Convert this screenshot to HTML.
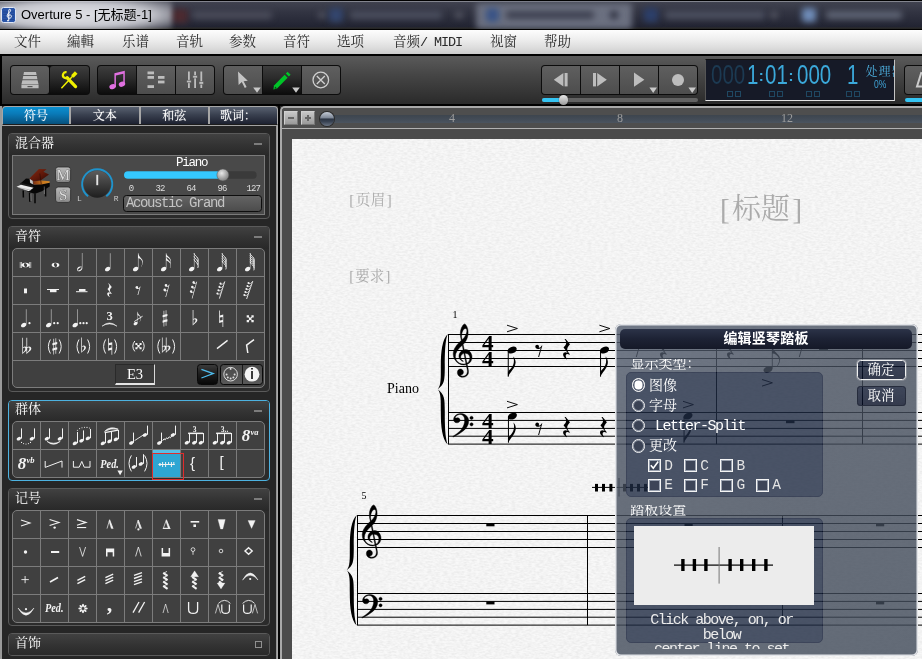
<!DOCTYPE html>
<html><head><meta charset="utf-8"><title>Overture 5</title>
<style>
*{box-sizing:border-box;margin:0;padding:0}
html,body{width:922px;height:659px;overflow:hidden;background:#2a2a2a}
body{font-family:"Liberation Sans","Noto Sans CJK SC",sans-serif;position:relative}
.abs,.abs *{position:absolute}
#app{will-change:transform;position:absolute;left:0;top:0;width:922px;height:659px;overflow:hidden;background:#292929}
.song{font-family:"Liberation Serif","Noto Serif CJK SC",serif}
/* title bar */
#title{left:0;top:0;width:922px;height:30px;background:#000;overflow:hidden}
#title .bar{left:0;top:1px;width:922px;height:28px;background:linear-gradient(180deg,#b8bac0 0,#40424f 4%,#323442 40%,#222432 92%,#2a2a2a 96%,#222 100%);overflow:hidden}
#title .glow{left:-20px;top:-2px;width:192px;height:32px;background:radial-gradient(ellipse at 50% 50%,rgba(235,236,240,.95) 0,rgba(225,226,232,.85) 55%,rgba(200,202,210,0) 100%);filter:blur(2.500px)}
#title .bl{filter:blur(3px);border-radius:3px}
#title .txt{left:21px;top:6.500px;font-size:13px;line-height:16px;color:#000;white-space:nowrap}
/* menu */
#menu{left:0;top:30px;width:922px;height:24px;background:linear-gradient(180deg,#fdfdfd 0,#f0f0f0 35%,#dcdcdc 75%,#cbcbcb 100%)}
#menu span{top:3.300px;font-size:13.500px;line-height:18px;color:#2a2a2a;white-space:nowrap}
/* toolbar */
#tb{left:0;top:54px;width:922px;height:52px;background:#000}
#tb .bg{left:2px;top:2px;width:920px;height:48px;background:linear-gradient(180deg,#5a5a5a 0,#454545 40%,#2a2a2a 100%)}
.btn{height:31px;top:11px;border:1px solid #1a1a1a;border-radius:4px;background:linear-gradient(180deg,#555 0,#3c3c3c 45%,#262626 55%,#1e1e1e 100%);box-shadow:inset 0 1px 0 rgba(255,255,255,.18)}

.grp{top:11px;height:30px;border-radius:4px;background:#0c0c0c;overflow:hidden;}
.b{top:1px;height:28px;}
.bl{background:linear-gradient(180deg,#5f5f5f 0,#4d4d4d 100%)}
.bd{background:linear-gradient(180deg,#3e3e3e 0,#2a2a2a 45%,#0c0c0c 100%)}
.grp svg{left:0;top:0}
#lcd{left:705px;top:5px;width:190px;height:42px;background:#161a27;border:1px solid #111;border-left-color:#555;border-right-color:#c4c4c4;border-bottom-color:#e4e4e4;overflow:hidden}
#lcd .d{top:2.800px;font-size:27.500px;line-height:24px;color:#3ba9da;transform-origin:0 0;transform:scaleX(.745);white-space:nowrap}
#lcd i{top:31.200px;width:6px;height:6px;border:1px solid #1f4862}

#left{left:0;top:106px;width:280px;height:553px;background:#262626}
#left .edge{left:0;top:0;width:2px;height:553px;background:#9a9a9a}
#tabs{left:2px;top:0;width:276px;height:19px;border:1px solid #a6a6a6;border-bottom-color:#1c1c1c;border-radius:4px 4px 0 0;overflow:hidden;background:#a6a6a6}
#tabs div{top:0;height:17px;background:linear-gradient(180deg,#596170 0,#3a4150 45%,#1d2130 100%);color:#fff;font-size:12px;line-height:18.500px;text-align:center;text-shadow:0 0 1px rgba(255,255,255,.6)}
#tabs div.on{background:linear-gradient(180deg,#0a8fd0 0,#0a7ab8 40%,#07507c 100%)}
#left .rb{left:276px;top:19px;width:2px;height:534px;background:linear-gradient(90deg,#8a8a8a,#b4b4b4)}
#left .tl{left:2px;top:19px;width:276px;height:1px;background:#a2a2a2}
#left .gap{left:278px;top:0;width:2px;height:553px;background:#050505}
.pnl{left:8px;width:262px;border:1px solid #5a5a5a;border-radius:4px;background:#2b2b2b;overflow:hidden}
.pnl .ph{left:0;top:0;width:262px;height:22px;background:linear-gradient(180deg,#414141 0,#333 50%,#282828 100%)}
.pnl .pt{left:6px;top:.8px;font-size:13px;line-height:16px;color:#fff;white-space:nowrap}
.grid{left:12px;width:253px;background:#404040;border:1px solid #7c7c7c;border-radius:5px;overflow:hidden}
.grid i{background:#7c7c7c}
.grid i.v{top:0;width:1px}
.grid i.h{left:0;width:253px;height:1px}
.ss{font-family:"Liberation Mono",monospace;letter-spacing:-.1em}

#score{left:280px;top:106px;width:642px;height:553px;background:#4b4b4b;border-left:2px solid #a9a9a9;border-top:2px solid #a9a9a9;border-radius:5px 0 0 0;overflow:hidden}
#ruler{left:0;top:0;width:640px;height:21px;background:#4e4e4e;border-bottom:1px solid #b2b2b2}
#ruler .trk{left:45px;top:7px;width:600px;height:8px;background:linear-gradient(180deg,#3d454e 0,#444d58 60%,#4b545f 100%)}
#ruler .zb{top:3px;width:14px;height:14px;background:linear-gradient(180deg,#c8c8c8 0,#9a9a9a 100%);border:1px solid #d0d0d0;border-right-color:#777;border-bottom-color:#777}
#ruler .n{top:3px;font-size:12px;line-height:14px;color:#9c9c9c}
#page{left:10px;top:31px;width:640px;height:530px;background:#f0f0f0;overflow:hidden}
#page svg{left:0;top:0}
.ph2{color:#ababab;white-space:nowrap}
.ph2 b{position:static;display:inline-block;width:.5em;text-align:center;font-weight:normal}

#dlgbg{left:615px;top:324px;width:303px;height:332px;border-radius:6px;background:linear-gradient(150deg,#505a6c 0,#454e5d 35%,#3f4958 100%);opacity:.8;overflow:hidden}
#dlgbg .gb{left:11px;width:197px;border-radius:5px;background:#1f2b43;border:1px solid #101a34}
#dlgbg .bb{left:241.500px;width:49px;height:20.500px;border-radius:3.500px;background:linear-gradient(180deg,#131d36 0,#050d24 100%)}
#dlg{left:615px;top:324px;width:303px;height:332px;overflow:hidden;color:#fff;border-radius:6px;box-shadow:inset 0 0 0 1.500px #e2e4e8}
#dlg .tb{left:5px;top:5px;width:292px;height:20px;border-radius:5px;background:linear-gradient(180deg,#2c3348 0,#1d2234 50%,#151928 100%);text-align:center;font-size:14px;line-height:19px;font-weight:bold;font-family:"Liberation Sans","Noto Sans CJK SC",sans-serif;letter-spacing:.2px}
#dlg .lbl{overflow:hidden;font-size:14px;line-height:14px;white-space:nowrap;color:#fff}
#dlg .lbl span{left:0;top:-1.900px}
#dlg .rd{left:17px;width:13.500px;height:13.500px;border-radius:7px;border:1.300px solid #f4f4f4;background:#3a4254;box-shadow:inset 0 0 0 1px #8a92a0}
#dlg .rd.on{background:#fff;box-shadow:inset 0 0 0 1.500px #596173}
#dlg .rl{font-size:14px;line-height:16px;white-space:nowrap;color:#fff}
#dlg .cb{width:13px;height:13px;border:1.300px solid #f4f4f4;background:#3d4558;box-shadow:inset 0 0 0 1px #98a0ae}
#dlg .cl{font-size:14.500px;line-height:14px;color:#e4e4e4}
#dlg .bt{left:241.500px;width:49px;height:20.500px;border-radius:3.500px;border:1px solid #262c3c;text-align:center;font-size:13.500px;line-height:17px;color:#fff}
#dlg .msg{left:16.500px;width:180px;text-align:center;font-size:15px;line-height:14px;color:#ececec;white-space:nowrap}
</style></head><body>
<div id="app" class="abs">
<!--TITLE-->
<div id="title"><div class="bar">
<div class="bl" style="left:172px;top:8px;width:16px;height:14px;background:#4c2a30"></div>
<div class="bl" style="left:192px;top:10px;width:80px;height:8px;background:#4a4c5a"></div>
<div class="bl" style="left:318px;top:11px;width:8px;height:6px;background:#555866"></div>
<div class="bl" style="left:329px;top:7px;width:14px;height:14px;background:#33466e"></div>
<div class="bl" style="left:350px;top:10px;width:92px;height:8px;background:#4a4e5e"></div>
<div class="bl" style="left:455px;top:11px;width:8px;height:6px;background:#5a5c68"></div>
<div class="bl" style="left:476px;top:2px;width:156px;height:26px;background:#6b7080"></div>
<div class="bl" style="left:486px;top:7px;width:13px;height:14px;background:#3a5486"></div>
<div class="bl" style="left:506px;top:10px;width:88px;height:8px;background:#3e4150"></div>
<div class="bl" style="left:610px;top:10px;width:8px;height:8px;background:#2e3040"></div>
<div class="bl" style="left:644px;top:7px;width:14px;height:14px;background:#2c3f6a"></div>
<div class="bl" style="left:665px;top:10px;width:100px;height:8px;background:#4c5060"></div>
<div class="bl" style="left:770px;top:11px;width:8px;height:6px;background:#5a5c68"></div>
<div class="bl" style="left:802px;top:7px;width:14px;height:14px;background:#6f8cb8"></div>
<div class="bl" style="left:826px;top:10px;width:76px;height:8px;background:#5e6474"></div>
<div class="glow"></div></div>
<svg style="left:1px;top:7px" width="15" height="16" viewBox="0 0 15 16"><rect x=".5" y=".5" width="14" height="15" rx="2" fill="#2a55a8" stroke="#dfe6f4" stroke-width="1"/><path d="M2 5h11M2 7.500h11M2 10h11M2 12.500h11" stroke="#1c3f88" stroke-width=".6"/><path d="M7.800 13.500V3.200c0-1.200 1.800-1.400 1.800 .2c0 1.800-3.400 2.800-3.400 5.400c0 1.600 1.200 2.400 2.200 2.400c1.400 0 2-1 2-1.800c0-1-.8-1.600-1.600-1.600c-.8 0-1.400 .6-1.400 1.400" fill="none" stroke="#fff" stroke-width="1"/><circle cx="7" cy="13.600" r=".9" fill="#fff"/></svg>
<div class="txt">Overture 5 - [无标题-1]</div></div>
<!--MENU-->
<div id="menu" class="song">
<span style="left:14px">文件</span><span style="left:67px">編輯</span><span style="left:122px">乐谱</span><span style="left:176px">音轨</span><span style="left:229px">参数</span><span style="left:283px">音符</span><span style="left:337px">选项</span><span style="left:393px">音频<b class="ss" style="position:static;font-weight:normal;font-size:13.500px;letter-spacing:-1.100px">/ MIDI</b></span><span style="left:490px">视窗</span><span style="left:544px">帮助</span>
</div>
<!--TOOLBAR-->
<div id="tb"><div class="bg"></div>
<div class="grp" style="left:10px;width:80px">
 <div class="b bl" style="left:1px;width:38px;border-radius:3px"></div>
 <div class="b bd" style="left:40px;width:39px;border-radius:3px"></div>
 <svg width="80" height="30" viewBox="10 65 80 30">
  <g fill="#bdbdbd"><path d="M24 72h12l.6 3h-13.2z M23.2 76h13.6l.6 3.2h-14.8z M22.4 80.2h15.2l.9 3.8h-17z M21.4 84.6h17.2v3.6h-17.2z"/><rect x="27.5" y="86" width="5" height="1.2" fill="#555"/></g>
  <g stroke="#f0f000" fill="none"><path d="M76.200 72.600L72.400 76.400" stroke-width="3.600"/><path d="M72.800 76L61.400 88.200" stroke-width="1.500"/><path d="M67 77.600L75.600 86.600" stroke-width="3.200" stroke-linecap="round"/><path d="M66.600 72.200A3 3 0 1 0 68.400 76.800" stroke-width="2.200"/></g>
 </svg>
</div>
<div class="grp" style="left:97px;width:118px">
 <div class="b bd" style="left:1px;width:38px;border-radius:3px 0 0 3px"></div>
 <div class="b bl" style="left:40px;width:38px"></div>
 <div class="b bl" style="left:79px;width:38px;border-radius:0 3px 3px 0"></div>
 <svg width="118" height="30" viewBox="97 65 118 30">
  <g fill="#e070e0"><path d="M114.400 73.200l10.400-2.400v13.600h-1.500v-10.600l-7.400 1.700v11.400h-1.500z"/><ellipse cx="112.600" cy="86.600" rx="3.300" ry="2.500" transform="rotate(-20 112.600 86.600)"/><ellipse cx="122" cy="84.200" rx="3.300" ry="2.500" transform="rotate(-20 122 84.200)"/></g>
  <g fill="#bdbdbd"><rect x="147.500" y="71.500" width="6.500" height="2.800"/><rect x="147.500" y="76" width="6.500" height="2.800"/><rect x="147.500" y="85.200" width="6.500" height="2.800"/><rect x="158" y="76" width="6.500" height="2.800"/><rect x="158" y="80.600" width="6.500" height="2.800"/></g>
  <g fill="#bdbdbd"><rect x="188" y="71.500" width="1.800" height="16.500"/><rect x="194.200" y="71.500" width="1.800" height="16.500"/><rect x="200.400" y="71.500" width="1.800" height="16.500"/><rect x="186.600" y="80.200" width="4.600" height="2.600" stroke="#555" stroke-width=".6"/><rect x="192.800" y="75.400" width="4.600" height="2.600" stroke="#555" stroke-width=".6"/><rect x="199" y="81.600" width="4.600" height="2.600" stroke="#555" stroke-width=".6"/></g>
 </svg>
</div>
<div class="grp" style="left:223px;width:118px">
 <div class="b bl" style="left:1px;width:38px;border-radius:3px 0 0 3px"></div>
 <div class="b bd" style="left:40px;width:38px"></div>
 <div class="b bl" style="left:79px;width:38px;border-radius:0 3px 3px 0"></div>
 <svg width="118" height="30" viewBox="223 65 118 30">
  <path d="M238 71.600l9.800 9.200-4.200.4 3 5.800-1.800 1-3-5.900-3.200 2.900z" fill="#c4c4c4"/>
  <path d="M253.200 87.400h7.600l-3.800 5.400z M292.200 87.400h7.600l-3.800 5.400z" fill="#c8c8c8"/>
  <g fill="#00c428"><path d="M274 85.600l10.600-10.800 3 3-10.600 10.800-3.600 .8z"/><path d="M285.800 73.600l1.800-1.800 3 3-1.800 1.800z"/></g><path d="M275 86.400l1.800 1.800-2.200.6z" fill="#0b3a12"/>
  <g fill="none" stroke="#cfcfcf" stroke-width="1.300"><circle cx="320.800" cy="80" r="7.800"/><path d="M316.800 76l8 8M324.800 76l-8 8"/></g>
 </svg>
</div>
<div class="grp" style="left:541px;width:157px">
 <div class="b bl" style="left:1px;width:38px;border-radius:3px 0 0 3px"></div>
 <div class="b bl" style="left:40px;width:38px"></div>
 <div class="b bl" style="left:79px;width:38px"></div>
 <div class="b bl" style="left:118px;width:38px;border-radius:0 3px 3px 0"></div>
 <svg width="157" height="30" viewBox="541 65 157 30">
  <g fill="#bdbdbd"><path d="M563.400 73v13.400l-9.600-6.700z"/><rect x="564.600" y="73" width="3" height="13.400"/>
  <rect x="593" y="73" width="3" height="13.400"/><path d="M597.200 73v13.400l9.600-6.700z"/>
  <path d="M634 72.600v14.200l10.400-7.100z"/><circle cx="678" cy="80" r="6"/>
  <path d="M649.400 87.600h7.600l-3.800 5.400z M688.400 87.600h7.600l-3.800 5.400z" fill="#c8c8c8"/></g>
 </svg>
</div>
<div style="left:542px;top:44px;width:156px;height:4px;border-radius:2px;background:#626262"></div>
<div style="left:542px;top:44px;width:20px;height:4px;border-radius:2px;background:#35c4f2"></div>
<div style="left:559px;top:41px;width:9px;height:10px;border-radius:4.500px;background:linear-gradient(180deg,#e8e8e8,#9a9a9a);box-shadow:0 0 1px #000"></div>
<div id="lcd">
 <div class="d" style="left:4.600px;color:#1c3a52">000</div>
 <div class="d" style="left:40.600px">1</div><div class="d" style="left:52.800px;font-size:15px;top:3.500px;font-weight:bold;transform:none">:</div>
 <div class="d" style="left:58.800px">01</div><div class="d" style="left:82.600px;font-size:15px;top:3.500px;font-weight:bold;transform:none">:</div>
 <div class="d" style="left:91px">000</div>
 <div class="d" style="left:140.800px">1</div>
 <i style="left:21.300px"></i><i style="left:29.200px"></i><i style="left:63.300px"></i><i style="left:71.200px"></i><i style="left:100px"></i><i style="left:108px"></i><i style="left:140.300px"></i><i style="left:148.200px"></i>
 <div class="song" style="left:157.500px;top:5px;font-size:12px;line-height:14px;color:#4fb4e4;white-space:nowrap;letter-spacing:1px"><span style="position:static;display:inline-block;width:2px;overflow:hidden;direction:rtl;vertical-align:top">:</span>处理器</div>
 <div style="left:167.500px;top:19.500px;font-size:10px;line-height:10px;color:#3fa2d4;transform:scaleX(.85);transform-origin:0 0">0%</div>
</div>
<div class="grp" style="left:904px;width:40px"><div class="b bl" style="left:1px;width:38px;border-radius:3px"></div>
<svg width="40" height="30" viewBox="904 65 40 30"><path d="M921.500 72l-4.500 14.500h6" fill="none" stroke="#ccc" stroke-width="2"/></svg></div>
<div style="left:905px;top:44px;width:30px;height:4px;border-radius:2px;background:#35c4f2"></div>
</div>
<div id="left"><div class="edge"></div><div class="rb"></div><div class="gap"></div><div class="tl"></div><div id="tabs" class="song"><div class="on" style="left:0;width:66px">符号</div><div style="left:67.500px;width:68.500px">文本</div><div style="left:137.500px;width:67.500px">和弦</div><div style="left:206.500px;width:68px;text-indent:-11px">歌词：</div></div><div class="pnl" style="top:27px;height:86px;border-color:#5a5a5a"><div class="ph"></div><div class="pt song">混合器</div><div style="left:245px;top:9px;width:8px;height:2px;background:#7c7c7c"></div></div><div class="pnl" style="top:120px;height:166px;border-color:#5a5a5a"><div class="ph"></div><div class="pt song">音符</div><div style="left:245px;top:9px;width:8px;height:2px;background:#7c7c7c"></div></div><div class="pnl" style="top:293.5px;height:81.5px;border-color:#4db2e0"><div class="ph"></div><div class="pt song">群体</div><div style="left:245px;top:9px;width:8px;height:2px;background:#7c7c7c"></div></div><div class="pnl" style="top:382px;height:138px;border-color:#5a5a5a"><div class="ph"></div><div class="pt song">记号</div><div style="left:245px;top:9px;width:8px;height:2px;background:#7c7c7c"></div></div><div class="pnl" style="top:527px;height:22.5px;border-color:#5a5a5a"><div class="ph"></div><div class="pt song">首饰</div><div style="left:245.500px;top:6.700px;width:7.700px;height:7.500px;border:1.800px solid #909090"></div></div><div id="mix" style="left:12px;top:49px;width:253px;height:60px;background:#494949;border:1px solid #7a7a7a"></div><svg style="left:0;top:0" width="280" height="120" viewBox="0 106 280 120"><defs><linearGradient id="lid" x1="0" y1="0" x2="1" y2="1"><stop offset="0" stop-color="#86280f"/><stop offset=".55" stop-color="#5e180a"/><stop offset="1" stop-color="#2c0803"/></linearGradient><linearGradient id="sb" x1="0" y1="0" x2="1" y2="0"><stop offset="0" stop-color="#7a2c10"/><stop offset=".6" stop-color="#c8781e"/><stop offset="1" stop-color="#d08828"/></linearGradient><linearGradient id="kn" x1="0" y1="0" x2="0" y2="1"><stop offset="0" stop-color="#5c5c5c"/><stop offset=".55" stop-color="#3a3a3a"/><stop offset="1" stop-color="#1e1e1e"/></linearGradient><linearGradient id="ms" x1="0" y1="0" x2="0" y2="1"><stop offset="0" stop-color="#b8b8b8"/><stop offset="1" stop-color="#8c8c8c"/></linearGradient><radialGradient id="sk" cx=".4" cy=".35" r=".7"><stop offset="0" stop-color="#e8e8e8"/><stop offset="1" stop-color="#7a7a7a"/></radialGradient></defs><g><path d="M26 178.400L29.500 178.800L30 183L34.300 185L49.700 182.600L49.700 186.400L42 191.300L35 193.800L28 192L20.400 183.600Z" fill="#070707"/><path d="M29.500 178.400L38.900 169L46.600 169.300L43.400 171.800L49 174.600L46.900 176L40.600 180.500L33 181.200Z" fill="url(#lid)"/><path d="M33 181.600L41.300 180.500L49.700 181.200L49.700 182.800L41.300 184.500L33.600 184.500Z" fill="url(#sb)"/><path d="M29.800 179.100L32.600 180.800L33 184.200L30.200 182.800Z" fill="#c8c8c8"/><path d="M39.800 173.500L41.300 184.500" stroke="#2a0a04" stroke-width=".6"/><path d="M20.600 182.800L33.200 185.800L32.800 187.600L20.200 184.400Z" fill="#1a1a1a"/><path d="M16.500 186.800L21 184.800L33.600 187.800L28.800 191.200Z" fill="#ececec"/><path d="M18.500 187.600L30.800 190.200" stroke="#9a9a9a" stroke-width=".6"/><path d="M23.200 190.600L23.400 197.600M29.600 192.800L29.800 201.800M35 193.600L35 203.200M45.500 186L45.600 196.600" stroke="#050505" stroke-width="1.500"/><path d="M30.800 193.500L31 201M44.300 186.500L44.400 194" stroke="#aaa" stroke-width=".5"/></g><rect x="55.600" y="167" width="15" height="15.400" rx="2.500" fill="url(#ms)" stroke="#2a2a2a" stroke-width=".8"/><text x="63.100" y="179.6" font-family="Liberation Serif,serif" font-size="15" text-anchor="middle" fill="#dcdcdc" stroke="#5c5c5c" stroke-width=".7" paint-order="stroke">M</text><rect x="55.600" y="187" width="15" height="15.400" rx="2.500" fill="url(#ms)" stroke="#2a2a2a" stroke-width=".8"/><text x="63.100" y="199.6" font-family="Liberation Serif,serif" font-size="15" text-anchor="middle" fill="#dcdcdc" stroke="#5c5c5c" stroke-width=".7" paint-order="stroke">S</text><circle cx="97.200" cy="184.300" r="13.500" fill="url(#kn)"/><path d="M88.11 196.36A15.1 15.1 0 1 1 106.29 196.36" fill="none" stroke="#1f93cc" stroke-width="1.900"/><rect x="96.300" y="174.800" width="1.900" height="10.400" fill="#e4e4e4"/><text x="77" y="201" font-family="Liberation Mono,monospace" font-size="8" fill="#ccc">L</text><text x="113.800" y="201" font-family="Liberation Mono,monospace" font-size="8" fill="#ccc">R</text><rect x="124" y="171.200" width="132.600" height="7.600" rx="3.800" fill="#3a3a3a"/><rect x="124" y="171.200" width="97" height="7.600" rx="3.800" fill="#35c8ff"/><circle cx="222.900" cy="175" r="6" fill="url(#sk)" stroke="#555" stroke-width=".5"/></svg><div class="ss" style="left:176px;top:50.5px;font-size:12.500px;line-height:13px;color:#fff;white-space:nowrap">Piano</div><div class="ss" style="left:128.8px;top:77.5px;font-size:9px;line-height:10px;color:#ddd;white-space:nowrap">0</div><div class="ss" style="left:155.6px;top:77.5px;font-size:9px;line-height:10px;color:#ddd;white-space:nowrap">32</div><div class="ss" style="left:186.6px;top:77.5px;font-size:9px;line-height:10px;color:#ddd;white-space:nowrap">64</div><div class="ss" style="left:217.6px;top:77.5px;font-size:9px;line-height:10px;color:#ddd;white-space:nowrap">96</div><div class="ss" style="left:246.4px;top:77.5px;font-size:9px;line-height:10px;color:#ddd;white-space:nowrap">127</div><div class="ss" style="left:122.500px;top:88.5px;width:139px;height:17px;border:1px solid #0e0e0e;border-radius:3.500px;background:linear-gradient(180deg,#646464,#4c4c4c);color:#c4c4c4;font-size:14px;line-height:15px;padding-left:2.500px;white-space:nowrap;overflow:hidden">Acoustic Grand</div><div class="grid" style="top:142px;height:140px"><i class="v" style="left:27px;height:112px"></i><i class="v" style="left:55px;height:112px"></i><i class="v" style="left:83px;height:112px"></i><i class="v" style="left:111px;height:112px"></i><i class="v" style="left:139px;height:112px"></i><i class="v" style="left:167px;height:112px"></i><i class="v" style="left:195px;height:112px"></i><i class="v" style="left:223px;height:112px"></i><i class="h" style="top:27px"></i><i class="h" style="top:55px"></i><i class="h" style="top:83px"></i><i class="h" style="top:111px"></i></div><div class="grid" style="top:315px;height:57px"><i class="v" style="left:27px;height:56px"></i><i class="v" style="left:55px;height:56px"></i><i class="v" style="left:83px;height:56px"></i><i class="v" style="left:111px;height:56px"></i><i class="v" style="left:139px;height:56px"></i><i class="v" style="left:167px;height:56px"></i><i class="v" style="left:195px;height:56px"></i><i class="v" style="left:223px;height:56px"></i><i class="h" style="top:27px"></i></div><div class="grid" style="top:404px;height:113px"><i class="v" style="left:27px;height:112px"></i><i class="v" style="left:55px;height:112px"></i><i class="v" style="left:83px;height:112px"></i><i class="v" style="left:111px;height:112px"></i><i class="v" style="left:139px;height:112px"></i><i class="v" style="left:167px;height:112px"></i><i class="v" style="left:195px;height:112px"></i><i class="v" style="left:223px;height:112px"></i><i class="h" style="top:27px"></i><i class="h" style="top:55px"></i><i class="h" style="top:83px"></i></div><div style="left:152.500px;top:343.5px;width:27.500px;height:27.500px;background:linear-gradient(180deg,#58bfe6 0,#58bfe6 3px,#2ea6d3 4px,#2ea6d3 100%)"></div><div style="left:152px;top:347px;width:32px;height:27px;border:1px solid #e02c2c"></div><div class="song" style="left:115px;top:258px;width:40px;height:21px;background:#3a3a3a;border:1px solid #2a2a2a;border-right:1.500px solid #d8d8d8;border-bottom:2px solid #e4e4e4;color:#fff;font-size:14.500px;line-height:19px;text-align:center">E3</div><div style="left:196.500px;top:257.5px;width:21.500px;height:21.500px;border-radius:3.500px;border:1px solid #0a0a0a;background:linear-gradient(180deg,#3a3a3a 0,#1c1c1c 50%,#080808 100%)"></div><div style="left:220px;top:257.5px;width:43px;height:21.500px;border-radius:3.500px;border:1px solid #0a0a0a;background:linear-gradient(180deg,#4a4a4a 0,#585858 100%)"><div style="left:20.500px;top:0;width:1px;height:20px;background:#1a1a1a"></div></div><svg style="left:0;top:0" width="280" height="553" viewBox="0 106 280 553" fill="#f2f2f2"><path transform="translate(18.9 267.5) scale(0.0185 -0.0185)" d="M564 -31V128Q562 90 532 63Q503 36 457 22Q411 8 359 8Q304 8 256 23Q209 38 180 66Q151 95 150 135V-31H114V301H150V141Q152 178 180 204Q209 231 254 246Q300 260 353 260Q410 260 458 245Q505 230 534 202Q563 174 564 135V301H597V-31ZM628 -31V301H663V-31ZM50 -31V301H85V-31ZM380 28Q414 28 426 53Q439 78 439 112Q439 146 424 175Q410 204 386 222Q362 240 332 240Q298 240 286 215Q275 190 275 156Q275 122 289 93Q303 64 327 46Q351 28 380 28Z"/><path transform="translate(50.75 267.48) scale(0.0185 -0.0185)" d="M50 135Q50 172 77 200Q104 228 150 244Q197 260 253 260Q310 260 358 244Q406 229 435 201Q464 173 464 135Q464 96 436 68Q408 39 362 24Q315 8 259 8Q203 8 156 23Q108 38 79 66Q50 95 50 135ZM280 28Q314 28 326 53Q339 78 339 112Q339 147 324 176Q310 205 286 222Q262 240 232 240Q198 240 186 215Q175 190 175 156Q175 122 189 93Q203 64 226 46Q250 28 280 28Z"/><path transform="translate(76.1 271.28) scale(0.018 -0.018)" d="M323 1009H347V169Q347 137 330 106Q314 76 286 52Q258 28 225 14Q192 -1 159 -1Q111 -1 80 22Q50 44 50 90Q50 141 78 182Q107 222 153 246Q199 269 251 269Q295 269 323 247ZM77 66Q77 56 84 48Q92 40 105 40Q140 40 192 69Q227 89 256 114Q284 138 301 162Q318 187 318 204Q318 215 312 222Q307 230 293 230Q274 230 247 218Q220 206 190 187Q161 168 135 146Q109 123 93 102Q77 81 77 66Z"/><path transform="translate(104.08 271.5) scale(0.018 -0.01804)" d="M350 1009V173Q350 130 322 93Q293 56 248 34Q203 11 153 11Q107 11 79 34Q51 58 51 98Q51 129 69 158Q87 187 116 210Q146 234 181 248Q216 261 250 261Q293 261 324 236V1009Z"/><path transform="translate(132.1 271.5) scale(0.018 -0.018)" d="M325 1009H351Q357 968 366 936Q375 905 392 876Q409 846 437 812Q467 777 487 754Q507 730 527 704Q564 658 582 610Q599 561 599 511Q599 407 511 259H495Q523 318 546 378Q568 437 568 491Q568 545 540 602Q512 659 462 698Q411 737 351 741V175Q351 132 324 94Q296 57 251 34Q206 11 152 11Q109 11 80 33Q50 55 50 98Q50 130 67 160Q84 189 112 212Q140 235 174 248Q207 261 241 261Q299 261 325 238Z"/><path transform="translate(160.1 271.5) scale(0.018 -0.018)" d="M321 1009H347Q350 980 356 958Q362 936 372 919Q389 892 413 872Q437 853 468 822Q498 793 527 758Q556 722 576 677Q595 632 595 576Q595 531 581 478Q607 440 607 368Q607 320 594 272Q581 225 556 191H540Q587 283 587 351Q587 406 556 452Q536 482 512 506Q487 529 449 554Q411 579 347 611V171Q347 128 318 92Q290 55 245 33Q200 11 152 11Q110 11 80 30Q50 49 50 89Q50 137 79 176Q108 215 154 238Q200 262 249 262Q294 262 321 238ZM353 823Q353 771 376 727Q384 713 408 682Q433 651 467 619Q505 583 534 550Q563 517 568 505Q570 513 571 524Q572 534 572 547Q572 623 523 690Q474 757 353 823Z"/><path transform="translate(188.08 271.5) scale(0.018 -0.01804)" d="M350 1009V173Q350 130 322 93Q293 56 248 34Q203 11 153 11Q107 11 79 34Q51 58 51 98Q51 129 69 158Q87 187 116 210Q146 234 181 248Q216 261 250 261Q293 261 324 236V1009Z"/><path d="M194.08 253.3c.4 2.2 2.6 3 3.6 4.8c.7 1.3 .6 2.6 .1 3.8" fill="none" stroke="#f2f2f2" stroke-width="1"/><path d="M194.08 256.3c.4 2.2 2.6 3 3.6 4.8c.7 1.3 .6 2.6 .1 3.8" fill="none" stroke="#f2f2f2" stroke-width="1"/><path d="M194.08 259.3c.4 2.2 2.6 3 3.6 4.8c.7 1.3 .6 2.6 .1 3.8" fill="none" stroke="#f2f2f2" stroke-width="1"/><path transform="translate(216.08 271.5) scale(0.018 -0.01804)" d="M350 1009V173Q350 130 322 93Q293 56 248 34Q203 11 153 11Q107 11 79 34Q51 58 51 98Q51 129 69 158Q87 187 116 210Q146 234 181 248Q216 261 250 261Q293 261 324 236V1009Z"/><path d="M222.08 253.3c.4 2.2 2.6 3 3.6 4.8c.7 1.3 .6 2.6 .1 3.8" fill="none" stroke="#f2f2f2" stroke-width="1"/><path d="M222.08 255.8c.4 2.2 2.6 3 3.6 4.8c.7 1.3 .6 2.6 .1 3.8" fill="none" stroke="#f2f2f2" stroke-width="1"/><path d="M222.08 258.3c.4 2.2 2.6 3 3.6 4.8c.7 1.3 .6 2.6 .1 3.8" fill="none" stroke="#f2f2f2" stroke-width="1"/><path d="M222.08 260.8c.4 2.2 2.6 3 3.6 4.8c.7 1.3 .6 2.6 .1 3.8" fill="none" stroke="#f2f2f2" stroke-width="1"/><path transform="translate(244.08 271.5) scale(0.018 -0.01804)" d="M350 1009V173Q350 130 322 93Q293 56 248 34Q203 11 153 11Q107 11 79 34Q51 58 51 98Q51 129 69 158Q87 187 116 210Q146 234 181 248Q216 261 250 261Q293 261 324 236V1009Z"/><path d="M250.08 253.3c.4 2.2 2.6 3 3.6 4.8c.7 1.3 .6 2.6 .1 3.8" fill="none" stroke="#f2f2f2" stroke-width="1"/><path d="M250.08 255.4c.4 2.2 2.6 3 3.6 4.8c.7 1.3 .6 2.6 .1 3.8" fill="none" stroke="#f2f2f2" stroke-width="1"/><path d="M250.08 257.5c.4 2.2 2.6 3 3.6 4.8c.7 1.3 .6 2.6 .1 3.8" fill="none" stroke="#f2f2f2" stroke-width="1"/><path d="M250.08 259.6c.4 2.2 2.6 3 3.6 4.8c.7 1.3 .6 2.6 .1 3.8" fill="none" stroke="#f2f2f2" stroke-width="1"/><path d="M250.08 261.7c.4 2.2 2.6 3 3.6 4.8c.7 1.3 .6 2.6 .1 3.8" fill="none" stroke="#f2f2f2" stroke-width="1"/><rect x="24" y="288.5" width="3" height="4.8" fill="#f2f2f2"/><rect x="47" y="289" width="12" height="1" fill="#f2f2f2"/><rect x="50" y="290" width="6.5" height="2.2" fill="#f2f2f2"/><rect x="76" y="291.2" width="11.5" height="1" fill="#f2f2f2"/><rect x="79" y="289" width="6.5" height="2.2" fill="#f2f2f2"/><path transform="translate(106.28 299.31) scale(0.018 -0.018)" d="M147 878 307 683Q257 624 230 581Q203 538 203 494Q203 457 227 416Q251 376 303 314L287 292Q243 320 205 320Q177 320 163 302Q149 283 149 257Q149 225 162 196Q176 168 199 142L186 123Q117 173 84 214Q51 255 51 303Q51 346 78 366Q105 386 143 386Q173 386 221 363V365L67 570Q168 659 168 736Q168 797 104 878Z"/><path transform="translate(134.47 300.24) scale(0.0195 -0.0195)" d="M155 269 251 609Q230 590 204 582Q177 574 151 574Q108 574 79 597Q50 620 50 663Q50 691 70 710Q90 730 121 730Q150 730 168 712Q187 693 187 662Q187 640 177 623Q177 617 189 617Q244 617 294 703H312L191 269Z"/><path transform="translate(162.52 299.74) scale(0.0185 -0.0185)" d="M155 147 251 487Q230 468 204 460Q177 452 151 452Q108 452 79 475Q50 498 50 541Q50 569 70 588Q89 608 121 608Q150 608 168 590Q187 571 187 540Q187 518 177 501Q177 495 189 495Q230 495 267 541L319 731Q298 712 272 704Q245 696 219 696Q176 696 147 719Q118 742 118 785Q118 813 138 832Q158 852 189 852Q219 852 237 833Q255 814 255 784Q255 774 252 764Q249 753 245 745Q245 739 257 739Q312 739 362 825H380L191 147Z"/><path transform="translate(188.94 298.45) scale(0.0182 -0.0182)" d="M155 -4 251 336Q230 317 204 309Q177 301 151 301Q108 301 79 324Q50 347 50 390Q50 417 70 437Q90 457 121 457Q150 457 168 438Q187 420 187 389Q187 367 177 350Q177 344 189 344Q230 344 267 390L319 580Q298 561 272 553Q245 545 219 545Q176 545 147 568Q118 591 118 634Q118 663 138 682Q158 701 189 701Q219 701 237 682Q255 663 255 633Q255 623 252 612Q249 602 245 594Q245 588 257 588Q298 588 334 633L390 834Q369 815 342 807Q316 799 290 799Q247 799 218 822Q189 845 189 888Q189 917 209 936Q229 955 260 955Q290 955 308 936Q326 917 326 887Q326 877 323 866Q320 856 316 848Q316 842 328 842Q382 842 433 928H451L191 -4Z"/><path d="M224.8 281.4L219.4 298.6" stroke="#f2f2f2" stroke-width="0.9" fill="none"/><circle cx="220.51" cy="283.6" r="1.05" fill="#f2f2f2"/><path d="M220.51 284.2Q222.61 284.9 224.01 282.8" fill="none" stroke="#f2f2f2" stroke-width="0.7"/><circle cx="219.47" cy="286.9" r="1.05" fill="#f2f2f2"/><path d="M219.47 287.5Q221.57 288.2 222.97 286.1" fill="none" stroke="#f2f2f2" stroke-width="0.7"/><circle cx="218.44" cy="290.2" r="1.05" fill="#f2f2f2"/><path d="M218.44 290.8Q220.54 291.5 221.94 289.4" fill="none" stroke="#f2f2f2" stroke-width="0.7"/><circle cx="217.4" cy="293.5" r="1.05" fill="#f2f2f2"/><path d="M217.4 294.1Q219.5 294.8 220.9 292.7" fill="none" stroke="#f2f2f2" stroke-width="0.7"/><path d="M252.8 281L246.6 299" stroke="#f2f2f2" stroke-width="0.9" fill="none"/><circle cx="248.51" cy="283" r="1.05" fill="#f2f2f2"/><path d="M248.51 283.6Q250.61 284.3 252.01 282.2" fill="none" stroke="#f2f2f2" stroke-width="0.7"/><circle cx="247.48" cy="286" r="1.05" fill="#f2f2f2"/><path d="M247.48 286.6Q249.58 287.3 250.98 285.2" fill="none" stroke="#f2f2f2" stroke-width="0.7"/><circle cx="246.44" cy="289" r="1.05" fill="#f2f2f2"/><path d="M246.44 289.6Q248.54 290.3 249.94 288.2" fill="none" stroke="#f2f2f2" stroke-width="0.7"/><circle cx="245.41" cy="292" r="1.05" fill="#f2f2f2"/><path d="M245.41 292.6Q247.51 293.3 248.91 291.2" fill="none" stroke="#f2f2f2" stroke-width="0.7"/><circle cx="244.38" cy="295" r="1.05" fill="#f2f2f2"/><path d="M244.38 295.6Q246.48 296.3 247.88 294.2" fill="none" stroke="#f2f2f2" stroke-width="0.7"/><path transform="translate(20.08 327.5) scale(0.018 -0.01804)" d="M350 1009V173Q350 130 322 93Q293 56 248 34Q203 11 153 11Q107 11 79 34Q51 58 51 98Q51 129 69 158Q87 187 116 210Q146 234 181 248Q216 261 250 261Q293 261 324 236V1009Z"/><circle cx="29.5" cy="323.2" r="1.1" fill="#f2f2f2"/><path transform="translate(45.08 327.5) scale(0.018 -0.01804)" d="M350 1009V173Q350 130 322 93Q293 56 248 34Q203 11 153 11Q107 11 79 34Q51 58 51 98Q51 129 69 158Q87 187 116 210Q146 234 181 248Q216 261 250 261Q293 261 324 236V1009Z"/><circle cx="54.2" cy="323.2" r="1.1" fill="#f2f2f2"/><circle cx="57.7" cy="323.2" r="1.1" fill="#f2f2f2"/><path transform="translate(71.58 327.5) scale(0.018 -0.01804)" d="M350 1009V173Q350 130 322 93Q293 56 248 34Q203 11 153 11Q107 11 79 34Q51 58 51 98Q51 129 69 158Q87 187 116 210Q146 234 181 248Q216 261 250 261Q293 261 324 236V1009Z"/><circle cx="80.3" cy="323.2" r="1.1" fill="#f2f2f2"/><circle cx="83.5" cy="323.2" r="1.1" fill="#f2f2f2"/><circle cx="86.7" cy="323.2" r="1.1" fill="#f2f2f2"/><text x="109.5" y="320" font-family="Liberation Serif,serif" font-size="12.5" font-weight="bold" font-style="normal" text-anchor="middle" fill="#f2f2f2">3</text><path d="M102 326.2Q109.5 319.6 117 326.2Q109.5 321.6 102 326.2Z" fill="#f2f2f2" stroke="#f2f2f2" stroke-width="0.5"/><path transform="translate(132.92 325.35) scale(0.0135 -0.0135)" d="M325 1009H351Q357 968 366 936Q375 905 392 876Q409 846 437 812Q467 777 487 754Q507 730 527 704Q564 658 582 610Q599 561 599 511Q599 407 511 259H495Q523 318 546 378Q568 437 568 491Q568 545 540 602Q512 659 462 698Q411 737 351 741V175Q351 132 324 94Q296 57 251 34Q206 11 152 11Q109 11 80 33Q50 55 50 98Q50 130 67 160Q84 189 112 212Q140 235 174 248Q207 261 241 261Q299 261 325 238Z"/><path d="M134.2 321.6L142.6 316.2" stroke="#f2f2f2" stroke-width="0.9" fill="none"/><path transform="translate(161.51 321.12) scale(0.0215 -0.0215)" d="M97 46V189L50 177V277L97 290V486H128V298L195 314V509H226V322L275 333V234L226 220V77L275 89V-14L226 -26V-214H195V-34L128 -52V-247H97V-59L50 -71V32ZM195 70V214L128 197V54Z"/><path transform="translate(191.53 324.3) scale(0.0232 -0.0232)" d="M50 615H81V225Q118 262 165 262Q197 262 223 240Q249 219 249 178Q249 146 230 119Q211 92 179 65L110 6Q91 -10 76 -26Q61 -41 50 -55ZM81 12Q107 40 125 64Q143 87 153 105Q164 124 170 140Q175 156 175 170Q175 198 162 210Q149 223 134 223Q118 223 102 212Q87 200 81 180Z"/><path transform="translate(218 321.87) scale(0.0232 -0.0232)" d="M226 316V-221H195V-9L50 -46V486H83V279ZM197 84V212L81 183V56Z"/><path transform="translate(245.34 322.34) scale(0.027 -0.027)" d="M224 0V45Q224 64 212 75Q199 86 181 86Q162 86 149 75Q136 64 136 47V0H50V86H105Q119 86 128 100Q136 114 136 131Q136 147 126 162Q117 176 111 176H50V262H136V209Q136 195 149 186Q162 176 181 176Q196 176 210 185Q224 194 224 207V262H310V176H259Q246 176 235 160Q224 145 224 131Q224 114 234 100Q243 86 259 86H310V0Z"/><path transform="translate(21.08 352.86) scale(0.0245 -0.0245)" d="M218 107Q210 95 192 78Q175 61 147 39Q92 -4 50 -55V615H79V225Q125 262 163 262Q195 262 218 242V615H249V225Q286 262 333 262Q365 262 391 240Q417 219 417 178Q417 146 398 119Q379 92 347 65L278 6Q239 -28 218 -55ZM249 12Q289 54 316 96Q343 137 343 170Q343 198 330 210Q317 223 302 223Q286 223 270 212Q255 200 249 180ZM79 12 120 59Q149 92 161 117Q173 142 173 170Q173 221 132 221Q116 221 100 210Q85 198 79 180Z"/><path d="M50.4 339.5Q46.4 346.5 50.4 353.5" fill="none" stroke="#f2f2f2" stroke-width="1"/><path d="M59.2 339.5Q63.2 346.5 59.2 353.5" fill="none" stroke="#f2f2f2" stroke-width="1"/><path transform="translate(51.31 349.12) scale(0.0215 -0.0215)" d="M97 46V189L50 177V277L97 290V486H128V298L195 314V509H226V322L275 333V234L226 220V77L275 89V-14L226 -26V-214H195V-34L128 -52V-247H97V-59L50 -71V32ZM195 70V214L128 197V54Z"/><path d="M79 339.5Q75 346.5 79 353.5" fill="none" stroke="#f2f2f2" stroke-width="1"/><path d="M87.6 339.5Q91.6 346.5 87.6 353.5" fill="none" stroke="#f2f2f2" stroke-width="1"/><path transform="translate(80.13 351.7) scale(0.0232 -0.0232)" d="M50 615H81V225Q118 262 165 262Q197 262 223 240Q249 219 249 178Q249 146 230 119Q211 92 179 65L110 6Q91 -10 76 -26Q61 -41 50 -55ZM81 12Q107 40 125 64Q143 87 153 105Q164 124 170 140Q175 156 175 170Q175 198 162 210Q149 223 134 223Q118 223 102 212Q87 200 81 180Z"/><path d="M105.6 339.5Q101.6 346.5 105.6 353.5" fill="none" stroke="#f2f2f2" stroke-width="1"/><path d="M114.6 339.5Q118.6 346.5 114.6 353.5" fill="none" stroke="#f2f2f2" stroke-width="1"/><path transform="translate(107 349.57) scale(0.0232 -0.0232)" d="M226 316V-221H195V-9L50 -46V486H83V279ZM197 84V212L81 183V56Z"/><path d="M134.8 341Q130.8 346.2 134.8 351.4" fill="none" stroke="#f2f2f2" stroke-width="1"/><path d="M142.2 341Q146.2 346.2 142.2 351.4" fill="none" stroke="#f2f2f2" stroke-width="1"/><path transform="translate(134.18 349.34) scale(0.024 -0.024)" d="M224 0V45Q224 64 212 75Q199 86 181 86Q162 86 149 75Q136 64 136 47V0H50V86H105Q119 86 128 100Q136 114 136 131Q136 147 126 162Q117 176 111 176H50V262H136V209Q136 195 149 186Q162 176 181 176Q196 176 210 185Q224 194 224 207V262H310V176H259Q246 176 235 160Q224 145 224 131Q224 114 234 100Q243 86 259 86H310V0Z"/><path d="M159.8 339.5Q155.8 346.5 159.8 353.5" fill="none" stroke="#f2f2f2" stroke-width="1"/><path d="M172.6 339.5Q176.6 346.5 172.6 353.5" fill="none" stroke="#f2f2f2" stroke-width="1"/><path transform="translate(160.78 351.7) scale(0.0232 -0.0232)" d="M218 107Q210 95 192 78Q175 61 147 39Q92 -4 50 -55V615H79V225Q125 262 163 262Q195 262 218 242V615H249V225Q286 262 333 262Q365 262 391 240Q417 219 417 178Q417 146 398 119Q379 92 347 65L278 6Q239 -28 218 -55ZM249 12Q289 54 316 96Q343 137 343 170Q343 198 330 210Q317 223 302 223Q286 223 270 212Q255 200 249 180ZM79 12 120 59Q149 92 161 117Q173 142 173 170Q173 221 132 221Q116 221 100 210Q85 198 79 180Z"/><path d="M217 348.6L227.6 340.4" stroke="#f2f2f2" stroke-width="1.4" fill="none"/><path d="M247.8 353L246.6 345.2L254 339.6" fill="none" stroke="#f2f2f2" stroke-width="1.5"/><path transform="translate(15.97 440.59) scale(0.0146 -0.01387)" d="M159 -1Q111 -1 80 22Q50 44 50 90Q50 141 78 182Q107 222 153 246Q199 269 251 269Q295 269 321 246Q347 222 347 179Q347 130 321 89Q295 48 252 24Q210 -1 159 -1Z"/><rect x="21" y="428.4" width="1" height="10.2" fill="#f2f2f2"/><path transform="translate(28.97 440.59) scale(0.0146 -0.01387)" d="M159 -1Q111 -1 80 22Q50 44 50 90Q50 141 78 182Q107 222 153 246Q199 269 251 269Q295 269 321 246Q347 222 347 179Q347 130 321 89Q295 48 252 24Q210 -1 159 -1Z"/><rect x="34" y="428.4" width="1" height="10.2" fill="#f2f2f2"/><circle cx="21.5" cy="442.4" r="0.55" fill="#f2f2f2"/><circle cx="23.6" cy="443.6" r="0.55" fill="#f2f2f2"/><circle cx="26" cy="444" r="0.55" fill="#f2f2f2"/><circle cx="28.4" cy="443.6" r="0.55" fill="#f2f2f2"/><circle cx="30.5" cy="442.4" r="0.55" fill="#f2f2f2"/><path transform="translate(43.97 440.59) scale(0.0146 -0.01387)" d="M159 -1Q111 -1 80 22Q50 44 50 90Q50 141 78 182Q107 222 153 246Q199 269 251 269Q295 269 321 246Q347 222 347 179Q347 130 321 89Q295 48 252 24Q210 -1 159 -1Z"/><rect x="49" y="428.4" width="1" height="10.2" fill="#f2f2f2"/><path transform="translate(56.97 440.59) scale(0.0146 -0.01387)" d="M159 -1Q111 -1 80 22Q50 44 50 90Q50 141 78 182Q107 222 153 246Q199 269 251 269Q295 269 321 246Q347 222 347 179Q347 130 321 89Q295 48 252 24Q210 -1 159 -1Z"/><rect x="62" y="428.4" width="1" height="10.2" fill="#f2f2f2"/><path d="M47 441.4Q53.5 447.2 60.2 441.4Q53.5 445 47 441.4Z" fill="#f2f2f2" stroke="#f2f2f2" stroke-width="0.6"/><path transform="translate(71.97 445.19) scale(0.0146 -0.01387)" d="M159 -1Q111 -1 80 22Q50 44 50 90Q50 141 78 182Q107 222 153 246Q199 269 251 269Q295 269 321 246Q347 222 347 179Q347 130 321 89Q295 48 252 24Q210 -1 159 -1Z"/><rect x="77" y="432" width="1" height="11.2" fill="#f2f2f2"/><path transform="translate(78.57 442.59) scale(0.0146 -0.01387)" d="M159 -1Q111 -1 80 22Q50 44 50 90Q50 141 78 182Q107 222 153 246Q199 269 251 269Q295 269 321 246Q347 222 347 179Q347 130 321 89Q295 48 252 24Q210 -1 159 -1Z"/><rect x="83" y="430.4" width="1" height="10.2" fill="#f2f2f2"/><path transform="translate(84.97 440.19) scale(0.0146 -0.01387)" d="M159 -1Q111 -1 80 22Q50 44 50 90Q50 141 78 182Q107 222 153 246Q199 269 251 269Q295 269 321 246Q347 222 347 179Q347 130 321 89Q295 48 252 24Q210 -1 159 -1Z"/><rect x="90" y="429" width="1" height="9.2" fill="#f2f2f2"/><circle cx="77.4" cy="430.2" r="0.55" fill="#f2f2f2"/><circle cx="79.6" cy="428.6" r="0.55" fill="#f2f2f2"/><circle cx="82" cy="427.7" r="0.55" fill="#f2f2f2"/><circle cx="84.5" cy="427.3" r="0.55" fill="#f2f2f2"/><circle cx="87" cy="427.4" r="0.55" fill="#f2f2f2"/><circle cx="89.6" cy="428" r="0.55" fill="#f2f2f2"/><path transform="translate(99.97 445.19) scale(0.0146 -0.01387)" d="M159 -1Q111 -1 80 22Q50 44 50 90Q50 141 78 182Q107 222 153 246Q199 269 251 269Q295 269 321 246Q347 222 347 179Q347 130 321 89Q295 48 252 24Q210 -1 159 -1Z"/><rect x="105" y="432" width="1" height="11.2" fill="#f2f2f2"/><path transform="translate(106.57 443.19) scale(0.0146 -0.01387)" d="M159 -1Q111 -1 80 22Q50 44 50 90Q50 141 78 182Q107 222 153 246Q199 269 251 269Q295 269 321 246Q347 222 347 179Q347 130 321 89Q295 48 252 24Q210 -1 159 -1Z"/><rect x="111" y="431" width="1" height="10.2" fill="#f2f2f2"/><path transform="translate(112.97 441.19) scale(0.0146 -0.01387)" d="M159 -1Q111 -1 80 22Q50 44 50 90Q50 141 78 182Q107 222 153 246Q199 269 251 269Q295 269 321 246Q347 222 347 179Q347 130 321 89Q295 48 252 24Q210 -1 159 -1Z"/><rect x="118" y="430" width="1" height="9.2" fill="#f2f2f2"/><path d="M104.6 431.4Q110 425.6 118.2 429.2Q110.4 427.6 104.6 431.4Z" fill="#f2f2f2" stroke="#f2f2f2" stroke-width="0.7"/><path d="M104.6 432.6L118.2 430.2" stroke="#f2f2f2" stroke-width="1.3" fill="none"/><path transform="translate(128.37 444.79) scale(0.0146 -0.01387)" d="M159 -1Q111 -1 80 22Q50 44 50 90Q50 141 78 182Q107 222 153 246Q199 269 251 269Q295 269 321 246Q347 222 347 179Q347 130 321 89Q295 48 252 24Q210 -1 159 -1Z"/><rect x="133" y="432.6" width="1" height="10.2" fill="#f2f2f2"/><path transform="translate(141.97 436.79) scale(0.0146 -0.01387)" d="M159 -1Q111 -1 80 22Q50 44 50 90Q50 141 78 182Q107 222 153 246Q199 269 251 269Q295 269 321 246Q347 222 347 179Q347 130 321 89Q295 48 252 24Q210 -1 159 -1Z"/><rect x="147" y="425.6" width="1" height="9.2" fill="#f2f2f2"/><path d="M134.6 440.6L143 435.2" stroke="#f2f2f2" stroke-width="0.9" fill="none"/><path transform="translate(156.37 444.79) scale(0.0146 -0.01387)" d="M159 -1Q111 -1 80 22Q50 44 50 90Q50 141 78 182Q107 222 153 246Q199 269 251 269Q295 269 321 246Q347 222 347 179Q347 130 321 89Q295 48 252 24Q210 -1 159 -1Z"/><rect x="161" y="432.6" width="1" height="10.2" fill="#f2f2f2"/><path transform="translate(169.97 436.79) scale(0.0146 -0.01387)" d="M159 -1Q111 -1 80 22Q50 44 50 90Q50 141 78 182Q107 222 153 246Q199 269 251 269Q295 269 321 246Q347 222 347 179Q347 130 321 89Q295 48 252 24Q210 -1 159 -1Z"/><rect x="175" y="425.6" width="1" height="9.2" fill="#f2f2f2"/><path d="M162.6 440.8l1.4-2 1.2 1 1.4-2 1.200 1 1.400-2 1.200 1 1.300-1.800" fill="none" stroke="#f2f2f2" stroke-width="1"/><path transform="translate(183.97 444.59) scale(0.0146 -0.01387)" d="M159 -1Q111 -1 80 22Q50 44 50 90Q50 141 78 182Q107 222 153 246Q199 269 251 269Q295 269 321 246Q347 222 347 179Q347 130 321 89Q295 48 252 24Q210 -1 159 -1Z"/><rect x="189" y="433" width="1" height="9.6" fill="#f2f2f2"/><path transform="translate(191.37 444.59) scale(0.0146 -0.01387)" d="M159 -1Q111 -1 80 22Q50 44 50 90Q50 141 78 182Q107 222 153 246Q199 269 251 269Q295 269 321 246Q347 222 347 179Q347 130 321 89Q295 48 252 24Q210 -1 159 -1Z"/><rect x="196" y="433" width="1" height="9.6" fill="#f2f2f2"/><path transform="translate(197.97 444.59) scale(0.0146 -0.01387)" d="M159 -1Q111 -1 80 22Q50 44 50 90Q50 141 78 182Q107 222 153 246Q199 269 251 269Q295 269 321 246Q347 222 347 179Q347 130 321 89Q295 48 252 24Q210 -1 159 -1Z"/><rect x="203" y="433" width="1" height="9.6" fill="#f2f2f2"/><rect x="188.1" y="432.6" width="14.9" height="1.5" fill="#f2f2f2"/><text x="194.5" y="431.6" font-family="Liberation Serif,serif" font-size="7.5" font-weight="bold" font-style="normal" text-anchor="middle" fill="#f2f2f2">3</text><path transform="translate(211.97 444.59) scale(0.0146 -0.01387)" d="M159 -1Q111 -1 80 22Q50 44 50 90Q50 141 78 182Q107 222 153 246Q199 269 251 269Q295 269 321 246Q347 222 347 179Q347 130 321 89Q295 48 252 24Q210 -1 159 -1Z"/><rect x="217" y="433" width="1" height="9.6" fill="#f2f2f2"/><path transform="translate(219.37 444.59) scale(0.0146 -0.01387)" d="M159 -1Q111 -1 80 22Q50 44 50 90Q50 141 78 182Q107 222 153 246Q199 269 251 269Q295 269 321 246Q347 222 347 179Q347 130 321 89Q295 48 252 24Q210 -1 159 -1Z"/><rect x="224" y="433" width="1" height="9.6" fill="#f2f2f2"/><path transform="translate(225.97 444.59) scale(0.0146 -0.01387)" d="M159 -1Q111 -1 80 22Q50 44 50 90Q50 141 78 182Q107 222 153 246Q199 269 251 269Q295 269 321 246Q347 222 347 179Q347 130 321 89Q295 48 252 24Q210 -1 159 -1Z"/><rect x="231" y="433" width="1" height="9.6" fill="#f2f2f2"/><rect x="216.1" y="432.6" width="14.9" height="1.5" fill="#f2f2f2"/><text x="224.5" y="431.6" font-family="Liberation Serif,serif" font-size="7.5" font-weight="bold" font-style="normal" text-anchor="middle" fill="#f2f2f2">3..</text><text x="246" y="441.2" font-family="Liberation Serif,serif" font-size="17" font-weight="bold" font-style="italic" text-anchor="middle" fill="#f2f2f2">8</text><text x="254.6" y="435.4" font-family="Liberation Serif,serif" font-size="8.5" font-weight="bold" font-style="italic" text-anchor="middle" fill="#f2f2f2">va</text><text x="22" y="469.4" font-family="Liberation Serif,serif" font-size="17" font-weight="bold" font-style="italic" text-anchor="middle" fill="#f2f2f2">8</text><text x="30.6" y="463.4" font-family="Liberation Serif,serif" font-size="8.5" font-weight="bold" font-style="italic" text-anchor="middle" fill="#f2f2f2">vb</text><path d="M45.2 461V467.4L62 461V467.6" fill="none" stroke="#f2f2f2" stroke-width="1"/><path d="M73.4 461V467.2H79.2L81.8 461.4L84.2 467.2H90V461" fill="none" stroke="#f2f2f2" stroke-width="1"/><text x="109.6" y="467.6" font-family="Liberation Serif,serif" font-size="11.5" font-weight="bold" font-style="italic" text-anchor="middle" fill="#f2f2f2" textLength="18.500" lengthAdjust="spacingAndGlyphs">Ped.</text><path d="M117.400 470.600h5.400l-2.700 4.600z" fill="#f2f2f2"/><path d="M131.400 455.400Q126.600 463.400 131.400 471.400" fill="none" stroke="#f2f2f2" stroke-width="1"/><path d="M144.600 455.400Q149.400 463.400 144.600 471.400" fill="none" stroke="#f2f2f2" stroke-width="1"/><path transform="translate(130.97 468.79) scale(0.0146 -0.01387)" d="M159 -1Q111 -1 80 22Q50 44 50 90Q50 141 78 182Q107 222 153 246Q199 269 251 269Q295 269 321 246Q347 222 347 179Q347 130 321 89Q295 48 252 24Q210 -1 159 -1Z"/><rect x="136" y="457" width="1" height="9.8" fill="#f2f2f2"/><path transform="translate(137.97 465.79) scale(0.0146 -0.01387)" d="M159 -1Q111 -1 80 22Q50 44 50 90Q50 141 78 182Q107 222 153 246Q199 269 251 269Q295 269 321 246Q347 222 347 179Q347 130 321 89Q295 48 252 24Q210 -1 159 -1Z"/><rect x="143" y="454.2" width="1" height="9.6" fill="#f2f2f2"/><rect x="158.4" y="464" width="16.4" height="1" fill="#f2f2f2"/><rect x="159" y="463.3" width="1.8" height="2.4" fill="#f2f2f2"/><rect x="162.1" y="462" width="1" height="5" fill="#f2f2f2"/><rect x="165.1" y="462" width="1" height="5" fill="#f2f2f2"/><rect x="168.1" y="462" width="1" height="3" fill="#f2f2f2"/><rect x="170.9" y="462" width="1" height="5" fill="#f2f2f2"/><rect x="173.3" y="462" width="1" height="3" fill="#f2f2f2"/><text x="192.6" y="467.6" font-family="Liberation Sans,serif" font-size="15" font-weight="normal" font-style="normal" text-anchor="middle" fill="#f2f2f2">{</text><text x="221.6" y="467.4" font-family="Liberation Sans,serif" font-size="15" font-weight="normal" font-style="normal" text-anchor="middle" fill="#f2f2f2">[</text><path d="M21 520L30 523L21 526" fill="none" stroke="#f2f2f2" stroke-width="1.1"/><path d="M49.600 519.600L59 522.600L49.600 525.600" fill="none" stroke="#f2f2f2" stroke-width="1.1"/><circle cx="54.6" cy="527.6" r="1.2" fill="#f2f2f2"/><path d="M77 519.600L86 522.400L77 525.200" fill="none" stroke="#f2f2f2" stroke-width="1.1"/><rect x="77" y="527" width="9.2" height="1.1" fill="#f2f2f2"/><path d="M107 528.600L109.600 519.800L113 528.600" fill="none" stroke="#f2f2f2" stroke-width="0.7"/><path d="M109.600 519.800L113 528.600L111.200 528.600L109.100 521.800Z" fill="#f2f2f2" stroke="#f2f2f2" stroke-width="0.3"/><path d="M135.600 528.400L138.200 520L141.400 528.400" fill="none" stroke="#f2f2f2" stroke-width="0.7"/><path d="M138.200 520L141.400 528.400L139.800 528.400L137.800 522Z" fill="#f2f2f2" stroke="#f2f2f2" stroke-width="0.3"/><circle cx="138.4" cy="529.4" r="1.1" fill="#f2f2f2"/><path d="M163.400 528.200L166.400 519.800L169.800 528.200Z" fill="none" stroke="#f2f2f2" stroke-width="0.7"/><path d="M166.400 519.800L169.800 528.200L168.200 528.200L166 521.800Z" fill="#f2f2f2" stroke="#f2f2f2" stroke-width="0.3"/><rect x="162.8" y="528" width="7.6" height="0.9" fill="#f2f2f2"/><rect x="190.6" y="521" width="8.6" height="1.6" fill="#f2f2f2"/><rect x="193.4" y="524.4" width="2.6" height="2.6" fill="#f2f2f2"/><path d="M218 519.600H225.200L222.800 529H220.600Z" fill="#f2f2f2" stroke="#f2f2f2" stroke-width="0.3"/><path d="M248 520.600H255.200L251.600 528.400Z" fill="#f2f2f2" stroke="#f2f2f2" stroke-width="0.3"/><circle cx="25.5" cy="552" r="1.7" fill="#f2f2f2"/><rect x="51" y="551" width="8.2" height="2" fill="#f2f2f2"/><path d="M79.600 547L82.600 556.400L85.600 547" fill="none" stroke="#f2f2f2" stroke-width="0.8"/><path d="M106 548.600H114.200V556.600H112.700V552.200H107.500V556.600H106Z" fill="#f2f2f2"/><path d="M135.600 556.400L138.400 547L141.200 556.400" fill="none" stroke="#f2f2f2" stroke-width="0.8"/><path d="M161.600 548H163.100V553H168.600V548H170.100V556.600H161.600Z" fill="#f2f2f2"/><circle cx="193" cy="549.6" r="1.9" fill="none" stroke="#f2f2f2" stroke-width="0.8"/><rect x="192.6" y="551.4" width="0.8" height="3.4" fill="#f2f2f2"/><circle cx="221" cy="551" r="1.8" fill="none" stroke="#f2f2f2" stroke-width="0.8"/><path d="M248.600 547.800L252.200 551L248.600 554.200L245 551Z" fill="none" stroke="#f2f2f2" stroke-width="1.4"/><path d="M21.400 579.600H28.800M25.100 576V583.200" fill="none" stroke="#f2f2f2" stroke-width="0.9"/><path d="M50 582L58 577.6" stroke="#f2f2f2" stroke-width="1.7" fill="none"/><path d="M77.4 580.4L85.2 576.4" stroke="#f2f2f2" stroke-width="1.5" fill="none"/><path d="M77.4 583.6L85.2 579.6" stroke="#f2f2f2" stroke-width="1.5" fill="none"/><path d="M105.4 577.6L113.2 574.2" stroke="#f2f2f2" stroke-width="1.4" fill="none"/><path d="M105.4 580.6L113.2 577.2" stroke="#f2f2f2" stroke-width="1.4" fill="none"/><path d="M105.4 583.6L113.2 580.2" stroke="#f2f2f2" stroke-width="1.4" fill="none"/><path d="M134 575.4L142 572.6" stroke="#f2f2f2" stroke-width="1.4" fill="none"/><path d="M134 578.5L142 575.7" stroke="#f2f2f2" stroke-width="1.4" fill="none"/><path d="M134 581.6L142 578.8" stroke="#f2f2f2" stroke-width="1.4" fill="none"/><path d="M134 584.7L142 581.9" stroke="#f2f2f2" stroke-width="1.4" fill="none"/><path d="M167 571.4L163.4 573.34" fill="none" stroke="#f2f2f2" stroke-width="0.8"/><path d="M163.2 572.9L167.6 575.91" fill="none" stroke="#f2f2f2" stroke-width="2.1"/><path d="M167 575.7L163.4 577.64" fill="none" stroke="#f2f2f2" stroke-width="0.8"/><path d="M163.2 577.21L167.6 580.22" fill="none" stroke="#f2f2f2" stroke-width="2.1"/><path d="M167 580L163.4 581.94" fill="none" stroke="#f2f2f2" stroke-width="0.8"/><path d="M163.2 581.5L167.6 584.51" fill="none" stroke="#f2f2f2" stroke-width="2.1"/><path d="M167 584.3L163.4 586.24" fill="none" stroke="#f2f2f2" stroke-width="0.8"/><path d="M163.2 585.8L167.6 588.81" fill="none" stroke="#f2f2f2" stroke-width="2.1"/><path d="M196 575.4L192.4 577.38" fill="none" stroke="#f2f2f2" stroke-width="0.8"/><path d="M192.2 576.94L196.6 580.02" fill="none" stroke="#f2f2f2" stroke-width="2.1"/><path d="M196 579.8L192.4 581.78" fill="none" stroke="#f2f2f2" stroke-width="0.8"/><path d="M192.2 581.34L196.6 584.42" fill="none" stroke="#f2f2f2" stroke-width="2.1"/><path d="M196 584.2L192.4 586.18" fill="none" stroke="#f2f2f2" stroke-width="0.8"/><path d="M192.2 585.74L196.6 588.82" fill="none" stroke="#f2f2f2" stroke-width="2.1"/><path d="M194.600 570.800L198.600 576.800H190.600Z" fill="#f2f2f2" stroke="#f2f2f2" stroke-width="0.2"/><path d="M222.6 571.4L219 573.35" fill="none" stroke="#f2f2f2" stroke-width="0.8"/><path d="M218.8 572.92L223.2 575.95" fill="none" stroke="#f2f2f2" stroke-width="2.1"/><path d="M222.6 575.73L219 577.68" fill="none" stroke="#f2f2f2" stroke-width="0.8"/><path d="M218.8 577.25L223.2 580.28" fill="none" stroke="#f2f2f2" stroke-width="2.1"/><path d="M222.6 580.07L219 582.02" fill="none" stroke="#f2f2f2" stroke-width="0.8"/><path d="M218.8 581.58L223.2 584.62" fill="none" stroke="#f2f2f2" stroke-width="2.1"/><path d="M221 589L225 583H217Z" fill="#f2f2f2" stroke="#f2f2f2" stroke-width="0.2"/><path d="M242.600 580Q250.200 566 258 580Q250.200 570.400 242.600 580Z" fill="#f2f2f2" stroke="#f2f2f2" stroke-width="0.5"/><circle cx="250.2" cy="579" r="1.1" fill="#f2f2f2"/><path d="M18 608Q26 622.600 34 608Q26 618.200 18 608Z" fill="#f2f2f2" stroke="#f2f2f2" stroke-width="0.5"/><circle cx="26" cy="609.2" r="1.1" fill="#f2f2f2"/><text x="54.2" y="612.4" font-family="Liberation Serif,serif" font-size="12" font-weight="bold" font-style="italic" text-anchor="middle" fill="#f2f2f2" textLength="18.500" lengthAdjust="spacingAndGlyphs">Ped.</text><ellipse cx="83" cy="605.5" rx="1.050" ry="1.700" fill="#f2f2f2" transform="rotate(0 83 608.500)"/><ellipse cx="83" cy="605.5" rx="1.050" ry="1.700" fill="#f2f2f2" transform="rotate(45 83 608.500)"/><ellipse cx="83" cy="605.5" rx="1.050" ry="1.700" fill="#f2f2f2" transform="rotate(90 83 608.500)"/><ellipse cx="83" cy="605.5" rx="1.050" ry="1.700" fill="#f2f2f2" transform="rotate(135 83 608.500)"/><ellipse cx="83" cy="605.5" rx="1.050" ry="1.700" fill="#f2f2f2" transform="rotate(180 83 608.500)"/><ellipse cx="83" cy="605.5" rx="1.050" ry="1.700" fill="#f2f2f2" transform="rotate(225 83 608.500)"/><ellipse cx="83" cy="605.5" rx="1.050" ry="1.700" fill="#f2f2f2" transform="rotate(270 83 608.500)"/><ellipse cx="83" cy="605.5" rx="1.050" ry="1.700" fill="#f2f2f2" transform="rotate(315 83 608.500)"/><text x="109.6" y="610.6" font-family="Liberation Serif,serif" font-size="22" font-weight="bold" font-style="normal" text-anchor="middle" fill="#f2f2f2">,</text><path d="M133 612.6L139 602" stroke="#f2f2f2" stroke-width="1.3" fill="none"/><path d="M138.6 612.6L144.6 602" stroke="#f2f2f2" stroke-width="1.3" fill="none"/><path d="M163 613L165.600 604L168.200 613" fill="none" stroke="#f2f2f2" stroke-width="0.7"/><path d="M188.600 602V609.400Q188.600 613.400 193.200 613.400Q197.600 613.400 197.600 609.400V602" fill="none" stroke="#f2f2f2" stroke-width="1.3"/><path d="M215.400 613.400L218 604.400L220.600 613.400" fill="none" stroke="#f2f2f2" stroke-width="0.7"/><path d="M221.800 604.400V610.200Q221.800 613.400 225.600 613.400Q229.400 613.400 229.400 610.200V604.400" fill="none" stroke="#f2f2f2" stroke-width="1.2"/><path d="M218.400 603.400Q224.600 597.400 230.400 603.400" fill="none" stroke="#f2f2f2" stroke-width="0.9"/><path d="M243.600 604.400V610.200Q243.600 613.400 247.400 613.400Q251.200 613.400 251.200 610.200V604.400" fill="none" stroke="#f2f2f2" stroke-width="1.2"/><path d="M252.400 613.400L255 604.400L257.600 613.400" fill="none" stroke="#f2f2f2" stroke-width="0.7"/><path d="M242.600 603.400Q248.800 597.400 254.600 603.400" fill="none" stroke="#f2f2f2" stroke-width="0.9"/><path d="M201.400 369.400L213.200 373.600L201.400 378" fill="none" stroke="#4fbdee" stroke-width="1.3"/><circle cx="230.6" cy="374.2" r="6.8" fill="none" stroke="#ddd" stroke-width="1"/><circle cx="226.6" cy="374.6" r="1" fill="#ddd"/><circle cx="227.8" cy="377.4" r="1" fill="#ddd"/><circle cx="230.6" cy="378.6" r="1" fill="#ddd"/><circle cx="233.4" cy="377.4" r="1" fill="#ddd"/><circle cx="234.6" cy="374.6" r="1" fill="#ddd"/><rect x="229.8" y="367.6" width="1.6" height="2.2" fill="#ddd"/><circle cx="252" cy="374.2" r="7.4" fill="#f4f4f4"/><text x="252" y="379.4" font-family="Liberation Sans,serif" font-size="14.5" font-weight="bold" font-style="normal" text-anchor="middle" fill="#3a3a3a">i</text></svg></div>
<div id="score"><div id="ruler"><div class="trk"></div><div class="zb" style="left:2px"><div style="left:3px;top:5px;width:6px;height:2px;background:#666"></div></div><div class="zb" style="left:19px"><div style="left:3px;top:5px;width:6px;height:2px;background:#666"></div><div style="left:5px;top:3px;width:2px;height:6px;background:#666"></div></div><div style="left:38px;top:3.500px;width:14px;height:14px;border-radius:7px;background:linear-gradient(180deg,#c4cbd6 0,#7d8796 42%,#2a3342 50%,#3a4454 70%,#6a7484 100%);box-shadow:0 0 0 1px #2a2a2a"></div><span class="n song" style="left:167px">4</span><span class="n song" style="left:335px">8</span><span class="n song" style="left:499px">12</span></div><div id="page"><svg width="640" height="530" viewBox="292 139 640 530"><defs><filter id="pap" x="0" y="0" width="100%" height="100%"><feTurbulence type="fractalNoise" baseFrequency=".25 .6" numOctaves="2" seed="3" result="n"/><feColorMatrix type="matrix" values="0 0 0 0 0  0 0 0 0 0  0 0 0 0 0  .1 0 0 0 -.03"/></filter></defs><rect x="292" y="139" width="640" height="530" fill="#f8f8f8"/><rect x="292" y="139" width="640" height="530" fill="#000" filter="url(#pap)"/><g fill="#000"><rect x="448" y="334" width="487" height="1"/><rect x="448" y="342" width="487" height="1"/><rect x="448" y="350" width="487" height="1"/><rect x="448" y="358" width="487" height="1"/><rect x="448" y="366" width="487" height="1"/><rect x="448" y="412" width="487" height="1"/><rect x="448" y="419.9" width="487" height="1"/><rect x="448" y="427.9" width="487" height="1"/><rect x="448" y="435.7" width="487" height="1"/><rect x="448" y="443.6" width="487" height="1"/><rect x="448" y="334.5" width="1" height="109.6"/><path d="M447.7 334C442.2 339.53 440.8 351.7 440.8 366.07C440.8 378.24 441.1 385.43 437.7 389.3C441.1 393.17 440.8 400.36 440.8 412.53C440.8 426.9 442.2 439.07 447.7 444.6C445.1 437.96 444.7 424.69 444.8 411.42C444.6 398.15 444.7 394.83 437.7 389.3C444.7 383.77 444.6 380.45 444.8 367.18C444.7 353.91 445.1 340.64 447.7 334Z"/><g stroke="#000" stroke-width="14" stroke-linejoin="round"><path transform="translate(451.66 364.99) scale(0.0308 -0.0308)" d="M314 801Q300 854 291 906Q282 958 282 1012Q282 1059 288 1100Q295 1142 307 1177Q320 1217 341 1252Q362 1288 386 1311Q409 1334 427 1334Q451 1334 493 1249Q514 1206 524 1156Q534 1106 534 1049Q534 978 515 908Q496 837 460 775Q423 713 372 666L407 498Q422 500 432 501Q442 502 447 502Q508 502 556 468Q604 433 632 377Q661 321 661 254Q661 177 622 116Q582 54 503 25Q508 8 532 -117Q538 -147 541 -164Q544 -182 545 -195Q546 -208 546 -225Q546 -275 522 -314Q497 -354 456 -376Q414 -398 363 -398Q311 -398 271 -378Q231 -359 208 -324Q185 -290 185 -245Q185 -197 212 -165Q238 -133 287 -133Q329 -133 356 -164Q382 -194 382 -236Q382 -272 357 -299Q332 -326 292 -326H282Q308 -365 364 -365Q433 -365 472 -320Q511 -275 511 -205Q511 -188 507 -160Q503 -131 493 -91Q483 -51 478 -25Q472 1 470 12Q436 2 390 2Q304 2 222 52Q142 102 96 184Q50 266 50 361Q50 451 91 530Q132 609 192 675Q253 741 314 801ZM341 826Q364 838 390 870Q416 903 440 945Q464 987 479 1030Q494 1072 494 1106Q494 1142 483 1163Q472 1184 445 1184Q421 1184 398 1162Q376 1140 358 1104Q341 1067 331 1022Q321 977 321 930Q321 898 328 872Q334 846 341 826ZM398 379Q371 373 347 354Q323 334 308 306Q294 279 294 248Q294 223 307 196Q320 170 339 154Q352 142 365 136Q380 129 380 123Q380 120 370 117Q332 126 302 151Q271 176 254 212Q236 247 236 287Q236 330 254 370Q271 410 302 442Q334 474 374 490L345 641Q229 547 174 456Q120 366 120 277Q120 212 154 156Q188 100 247 66Q306 31 380 31Q400 31 420 35Q441 39 464 45ZM495 55Q593 97 593 227Q593 270 571 306Q549 341 512 362Q475 383 429 383Z"/><path transform="translate(451.33 440.06) scale(0.0294 -0.0294)" d="M50 123Q216 231 288 301Q336 348 373 408Q410 469 432 536Q453 603 453 669Q453 728 435 774Q417 819 383 845Q349 871 302 871Q284 871 264 867Q245 863 224 855Q181 839 158 814Q135 788 135 765Q135 756 143 752Q151 748 158 748Q168 748 183 752Q190 754 196 755Q203 756 210 756Q248 756 272 734Q296 711 296 674Q296 638 266 612Q236 586 195 586Q146 586 111 617Q76 648 76 697Q76 756 109 802Q142 848 198 874Q255 900 324 900Q400 900 460 867Q520 834 556 776Q591 719 591 646Q591 551 538 464Q511 419 476 379Q442 339 389 298Q336 256 256 208Q176 160 57 101ZM687 809Q710 809 726 793Q742 777 742 754Q742 731 726 716Q710 700 687 700Q664 700 648 716Q632 731 632 754Q632 777 648 793Q664 809 687 809ZM687 589Q710 589 726 573Q742 557 742 534Q742 511 726 496Q710 480 687 480Q664 480 648 496Q632 511 632 534Q632 557 648 573Q664 589 687 589Z"/></g><rect x="357" y="515" width="578" height="1"/><rect x="357" y="523" width="578" height="1"/><rect x="357" y="531" width="578" height="1"/><rect x="357" y="539" width="578" height="1"/><rect x="357" y="547" width="578" height="1"/><rect x="357" y="593" width="578" height="1"/><rect x="357" y="600.9" width="578" height="1"/><rect x="357" y="608.9" width="578" height="1"/><rect x="357" y="616.7" width="578" height="1"/><rect x="357" y="624.6" width="578" height="1"/><rect x="357" y="515.5" width="1" height="109.6"/><path d="M356.7 515C351.2 520.53 349.8 532.7 349.8 547.07C349.8 559.24 350.1 566.43 346.7 570.3C350.1 574.17 349.8 581.36 349.8 593.53C349.8 607.9 351.2 620.07 356.7 625.6C354.1 618.96 353.7 605.69 353.8 592.42C353.6 579.15 353.7 575.83 346.7 570.3C353.7 564.77 353.6 561.45 353.8 548.18C353.7 534.91 354.1 521.64 356.7 515Z"/><g stroke="#000" stroke-width="14" stroke-linejoin="round"><path transform="translate(360.66 545.99) scale(0.0308 -0.0308)" d="M314 801Q300 854 291 906Q282 958 282 1012Q282 1059 288 1100Q295 1142 307 1177Q320 1217 341 1252Q362 1288 386 1311Q409 1334 427 1334Q451 1334 493 1249Q514 1206 524 1156Q534 1106 534 1049Q534 978 515 908Q496 837 460 775Q423 713 372 666L407 498Q422 500 432 501Q442 502 447 502Q508 502 556 468Q604 433 632 377Q661 321 661 254Q661 177 622 116Q582 54 503 25Q508 8 532 -117Q538 -147 541 -164Q544 -182 545 -195Q546 -208 546 -225Q546 -275 522 -314Q497 -354 456 -376Q414 -398 363 -398Q311 -398 271 -378Q231 -359 208 -324Q185 -290 185 -245Q185 -197 212 -165Q238 -133 287 -133Q329 -133 356 -164Q382 -194 382 -236Q382 -272 357 -299Q332 -326 292 -326H282Q308 -365 364 -365Q433 -365 472 -320Q511 -275 511 -205Q511 -188 507 -160Q503 -131 493 -91Q483 -51 478 -25Q472 1 470 12Q436 2 390 2Q304 2 222 52Q142 102 96 184Q50 266 50 361Q50 451 91 530Q132 609 192 675Q253 741 314 801ZM341 826Q364 838 390 870Q416 903 440 945Q464 987 479 1030Q494 1072 494 1106Q494 1142 483 1163Q472 1184 445 1184Q421 1184 398 1162Q376 1140 358 1104Q341 1067 331 1022Q321 977 321 930Q321 898 328 872Q334 846 341 826ZM398 379Q371 373 347 354Q323 334 308 306Q294 279 294 248Q294 223 307 196Q320 170 339 154Q352 142 365 136Q380 129 380 123Q380 120 370 117Q332 126 302 151Q271 176 254 212Q236 247 236 287Q236 330 254 370Q271 410 302 442Q334 474 374 490L345 641Q229 547 174 456Q120 366 120 277Q120 212 154 156Q188 100 247 66Q306 31 380 31Q400 31 420 35Q441 39 464 45ZM495 55Q593 97 593 227Q593 270 571 306Q549 341 512 362Q475 383 429 383Z"/><path transform="translate(360.33 621.06) scale(0.0294 -0.0294)" d="M50 123Q216 231 288 301Q336 348 373 408Q410 469 432 536Q453 603 453 669Q453 728 435 774Q417 819 383 845Q349 871 302 871Q284 871 264 867Q245 863 224 855Q181 839 158 814Q135 788 135 765Q135 756 143 752Q151 748 158 748Q168 748 183 752Q190 754 196 755Q203 756 210 756Q248 756 272 734Q296 711 296 674Q296 638 266 612Q236 586 195 586Q146 586 111 617Q76 648 76 697Q76 756 109 802Q142 848 198 874Q255 900 324 900Q400 900 460 867Q520 834 556 776Q591 719 591 646Q591 551 538 464Q511 419 476 379Q442 339 389 298Q336 256 256 208Q176 160 57 101ZM687 809Q710 809 726 793Q742 777 742 754Q742 731 726 716Q710 700 687 700Q664 700 648 716Q632 731 632 754Q632 777 648 793Q664 809 687 809ZM687 589Q710 589 726 573Q742 557 742 534Q742 511 726 496Q710 480 687 480Q664 480 648 496Q632 511 632 534Q632 557 648 573Q664 589 687 589Z"/></g><path d="M507 325.2L517.4 328.5L507 331.8" fill="none" stroke="#000" stroke-width=".95"/><path d="M599.4 325.2L609.8 328.5L599.4 331.8" fill="none" stroke="#000" stroke-width=".95"/><path d="M507 401.3L517.4 404.6L507 407.9" fill="none" stroke="#000" stroke-width=".95"/><path transform="translate(506.19 353.44) scale(0.0303 -0.0256)" d="M159 -1Q111 -1 80 22Q50 44 50 90Q50 141 78 182Q107 222 153 246Q199 269 251 269Q295 269 321 246Q347 222 347 179Q347 130 321 89Q295 48 252 24Q210 -1 159 -1Z"/><rect x="507.75" y="350.5" width="1" height="26.1"/><path d="M507.95 376.9C509.75 372.6 514.85 368.6 515.55 363C515.85 360.4 514.65 358 513.25 356.6C514.55 360.6 513.95 364.6 511.45 367.8C510.05 369.6 508.75 370.2 508.65 371.6L507.95 371.6Z"/><path transform="translate(598.49 353.44) scale(0.0303 -0.0256)" d="M159 -1Q111 -1 80 22Q50 44 50 90Q50 141 78 182Q107 222 153 246Q199 269 251 269Q295 269 321 246Q347 222 347 179Q347 130 321 89Q295 48 252 24Q210 -1 159 -1Z"/><rect x="600.05" y="350.5" width="1" height="26.1"/><path d="M600.25 376.9C602.05 372.6 607.15 368.6 607.85 363C608.15 360.4 606.95 358 605.55 356.6C606.85 360.6 606.25 364.6 603.75 367.8C602.35 369.6 601.05 370.2 600.95 371.6L600.25 371.6Z"/><path transform="translate(506.38 419.54) scale(0.0303 -0.0256)" d="M159 -1Q111 -1 80 22Q50 44 50 90Q50 141 78 182Q107 222 153 246Q199 269 251 269Q295 269 321 246Q347 222 347 179Q347 130 321 89Q295 48 252 24Q210 -1 159 -1Z"/><rect x="507.95" y="416.6" width="1" height="26"/><path d="M508.15 442.9C509.95 438.6 515.05 434.6 515.75 429C516.05 426.4 514.85 424 513.45 422.6C514.75 426.6 514.15 430.6 511.65 433.8C510.25 435.6 508.95 436.2 508.85 437.6L508.15 437.6Z"/><path transform="translate(533.95 364.34) scale(0.0269 -0.0269)" d="M155 269 251 609Q230 590 204 582Q177 574 151 574Q108 574 79 597Q50 620 50 663Q50 691 70 710Q90 730 121 730Q150 730 168 712Q187 693 187 662Q187 640 177 623Q177 617 189 617Q244 617 294 703H312L191 269Z"/><path transform="translate(561.73 362.72) scale(0.0269 -0.0269)" d="M147 878 307 683Q257 624 230 581Q203 538 203 494Q203 457 227 416Q251 376 303 314L287 292Q243 320 205 320Q177 320 163 302Q149 283 149 257Q149 225 162 196Q176 168 199 142L186 123Q117 173 84 214Q51 255 51 303Q51 346 78 366Q105 386 143 386Q173 386 221 363V365L67 570Q168 659 168 736Q168 797 104 878Z"/><path transform="translate(533.95 442.24) scale(0.0269 -0.0269)" d="M155 269 251 609Q230 590 204 582Q177 574 151 574Q108 574 79 597Q50 620 50 663Q50 691 70 710Q90 730 121 730Q150 730 168 712Q187 693 187 662Q187 640 177 623Q177 617 189 617Q244 617 294 703H312L191 269Z"/><path transform="translate(561.73 440.62) scale(0.0269 -0.0269)" d="M147 878 307 683Q257 624 230 581Q203 538 203 494Q203 457 227 416Q251 376 303 314L287 292Q243 320 205 320Q177 320 163 302Q149 283 149 257Q149 225 162 196Q176 168 199 142L186 123Q117 173 84 214Q51 255 51 303Q51 346 78 366Q105 386 143 386Q173 386 221 363V365L67 570Q168 659 168 736Q168 797 104 878Z"/><path transform="translate(598.63 440.62) scale(0.0269 -0.0269)" d="M147 878 307 683Q257 624 230 581Q203 538 203 494Q203 457 227 416Q251 376 303 314L287 292Q243 320 205 320Q177 320 163 302Q149 283 149 257Q149 225 162 196Q176 168 199 142L186 123Q117 173 84 214Q51 255 51 303Q51 346 78 366Q105 386 143 386Q173 386 221 363V365L67 570Q168 659 168 736Q168 797 104 878Z"/><rect x="716" y="334.5" width="1" height="109.6"/><rect x="862" y="334.5" width="1" height="109.6"/><path transform="translate(631.65 364.34) scale(0.0269 -0.0269)" d="M155 269 251 609Q230 590 204 582Q177 574 151 574Q108 574 79 597Q50 620 50 663Q50 691 70 710Q90 730 121 730Q150 730 168 712Q187 693 187 662Q187 640 177 623Q177 617 189 617Q244 617 294 703H312L191 269Z"/><path transform="translate(658.63 362.72) scale(0.0269 -0.0269)" d="M147 878 307 683Q257 624 230 581Q203 538 203 494Q203 457 227 416Q251 376 303 314L287 292Q243 320 205 320Q177 320 163 302Q149 283 149 257Q149 225 162 196Q176 168 199 142L186 123Q117 173 84 214Q51 255 51 303Q51 346 78 366Q105 386 143 386Q173 386 221 363V365L67 570Q168 659 168 736Q168 797 104 878Z"/><path transform="translate(794.65 364.34) scale(0.0269 -0.0269)" d="M155 269 251 609Q230 590 204 582Q177 574 151 574Q108 574 79 597Q50 620 50 663Q50 691 70 710Q90 730 121 730Q150 730 168 712Q187 693 187 662Q187 640 177 623Q177 617 189 617Q244 617 294 703H312L191 269Z"/><path transform="translate(725.63 362.72) scale(0.0269 -0.0269)" d="M147 878 307 683Q257 624 230 581Q203 538 203 494Q203 457 227 416Q251 376 303 314L287 292Q243 320 205 320Q177 320 163 302Q149 283 149 257Q149 225 162 196Q176 168 199 142L186 123Q117 173 84 214Q51 255 51 303Q51 346 78 366Q105 386 143 386Q173 386 221 363V365L67 570Q168 659 168 736Q168 797 104 878Z"/><path transform="translate(761.99 372.94) scale(0.0303 -0.0262)" d="M325 1009H351Q357 968 366 936Q375 905 392 876Q409 846 437 812Q467 777 487 754Q507 730 527 704Q564 658 582 610Q599 561 599 511Q599 407 511 259H495Q523 318 546 378Q568 437 568 491Q568 545 540 602Q512 659 462 698Q411 737 351 741V175Q351 132 324 94Q296 57 251 34Q206 11 152 11Q109 11 80 33Q50 55 50 98Q50 130 67 160Q84 189 112 212Q140 235 174 248Q207 261 241 261Q299 261 325 238Z"/><path d="M762 379.5L772.4 382.8L762 386.1" fill="none" stroke="#000" stroke-width=".95"/><path d="M683 401.3L693.4 404.6L683 407.9" fill="none" stroke="#000" stroke-width=".95"/><path transform="translate(681.99 419.54) scale(0.0303 -0.0256)" d="M159 -1Q111 -1 80 22Q50 44 50 90Q50 141 78 182Q107 222 153 246Q199 269 251 269Q295 269 321 246Q347 222 347 179Q347 130 321 89Q295 48 252 24Q210 -1 159 -1Z"/><rect x="683.55" y="416.6" width="1" height="26"/><path d="M683.75 442.9C685.55 438.6 690.65 434.6 691.35 429C691.65 426.4 690.45 424 689.05 422.6C690.35 426.6 689.75 430.6 687.25 433.8C685.85 435.6 684.55 436.2 684.45 437.6L683.75 437.6Z"/><rect x="786" y="420.2" width="8.5" height="3"/><rect x="819" y="347.5" width="9" height="3"/><rect x="587" y="515.5" width="1" height="109.6"/><rect x="782" y="515.5" width="1" height="109.6"/><rect x="486.3" y="523.3" width="8.2" height="3"/><rect x="486.3" y="601.4" width="8.2" height="3"/><rect x="684.5" y="523.3" width="8.2" height="3"/><rect x="684.5" y="601.4" width="8.2" height="3"/><rect x="876" y="523.3" width="8.2" height="3"/><rect x="876" y="601.4" width="8.2" height="3"/><rect x="592" y="486.9" width="56" height="1"/><rect x="595" y="483.900" width="3" height="7.600"/><rect x="602" y="483.900" width="3" height="7.600"/><rect x="609.4" y="483.900" width="3" height="7.600"/><rect x="623" y="483.900" width="3" height="7.600"/><rect x="630" y="483.900" width="3" height="7.600"/><rect x="637" y="483.900" width="3" height="7.600"/><rect x="644" y="483.900" width="3" height="7.600"/><rect x="618.6" y="478" width="0.8" height="18.6"/></g><text x="482" y="350.300" font-family="Liberation Serif,serif" font-weight="bold" font-size="22" textLength="11.600" lengthAdjust="spacingAndGlyphs">4</text><text x="482" y="366.300" font-family="Liberation Serif,serif" font-weight="bold" font-size="22" textLength="11.600" lengthAdjust="spacingAndGlyphs">4</text><text x="482" y="428.200" font-family="Liberation Serif,serif" font-weight="bold" font-size="22" textLength="11.600" lengthAdjust="spacingAndGlyphs">4</text><text x="482" y="444" font-family="Liberation Serif,serif" font-weight="bold" font-size="22" textLength="11.600" lengthAdjust="spacingAndGlyphs">4</text><text x="452.600" y="317.500" font-family="Liberation Serif,serif" font-size="10">1</text><text x="361.600" y="498.800" font-family="Liberation Serif,serif" font-size="10">5</text><text x="387" y="393.200" font-family="Liberation Serif,serif" font-size="14">Piano</text></svg><div class="ph2 song" style="left:56px;top:50px;font-size:15px;line-height:22px"><b>[</b>页眉<b>]</b></div><div class="ph2 song" style="left:56px;top:126px;font-size:14.500px;line-height:22px"><b>[</b>要求<b>]</b></div><div class="ph2 song" style="left:425.5px;top:49.5px;font-size:29px;line-height:40px"><b>[</b>标题<b>]</b></div></div></div>
<div id="dlgbg"><div class="gb" style="top:48px;height:125px"></div><div class="gb" style="top:193.5px;height:125.500px"></div><div class="bb" style="top:35.5px"></div><div class="bb" style="top:61.5px"></div></div><div id="dlg"><div class="tb">编辑竖琴踏板</div><div class="lbl song" style="left:15.5px;top:35.19999999999999px;width:70px;height:13px"><span>显示类型：</span></div><div class="rd on" style="left:16.799999999999955px;top:54.45px"></div><div class="rl song" style="left:34px;top:53.6px">图像</div><div class="rd" style="left:16.799999999999955px;top:74.65px"></div><div class="rl song" style="left:34px;top:73.8px">字母</div><div class="rd" style="left:16.799999999999955px;top:94.85px"></div><div class="rl song" style="left:34px;top:94px"><span class="ss" style="position:static;font-size:15px;margin-left:6px">Letter-Split</span></div><div class="rd" style="left:16.799999999999955px;top:115.05px"></div><div class="rl song" style="left:34px;top:114.2px">更改</div><div class="cb" style="left:33px;top:134.8px"><svg style="left:0;top:0" width="11" height="11" viewBox="0 0 11 11"><path d="M1.800 5.200L4.300 8.200L9.200 1.600" fill="none" stroke="#fff" stroke-width="1.600"/></svg></div><div class="cl ss" style="left:49.2px;top:134.5px">D</div><div class="cb" style="left:69px;top:134.8px"></div><div class="cl ss" style="left:85.2px;top:134.5px">C</div><div class="cb" style="left:105.2px;top:134.8px"></div><div class="cl ss" style="left:121.4px;top:134.5px">B</div><div class="cb" style="left:33px;top:154.6px"></div><div class="cl ss" style="left:49.2px;top:154.3px">E</div><div class="cb" style="left:69px;top:154.6px"></div><div class="cl ss" style="left:85.2px;top:154.3px">F</div><div class="cb" style="left:105.2px;top:154.6px"></div><div class="cl ss" style="left:121.4px;top:154.3px">G</div><div class="cb" style="left:141px;top:154.6px"></div><div class="cl ss" style="left:157.2px;top:154.3px">A</div><div class="bt song" style="top:35.5px;border-color:#f0f0f0;box-shadow:0 0 0 .5px rgba(255,255,255,.4)">确定</div><div class="bt song" style="top:61.5px">取消</div><div class="lbl song" style="left:15.200000000000045px;top:180.7px;width:70px;height:13px"><span>踏板设置</span></div><div style="left:19.200000000000045px;top:202px;width:180px;height:78.500px;background:#ececec"></div><div style="left:15px;top:289.20000000000005px;width:190px;height:36px;overflow:hidden"><div class="msg ss" style="top:1px;left:1.500px">Click above, on, or</div><div class="msg ss" style="top:15.500px;left:1.500px">below</div><div class="msg ss" style="top:30px;left:1.500px">center line to set</div></div><svg style="left:0;top:0" width="303" height="331" viewBox="615 324 303 331" ><rect x="674" y="564.500" width="99" height="1.200" fill="#000"/><rect x="718.600" y="547" width="1" height="36.600" fill="#777"/><rect x="681.2" y="559" width="3.400" height="12" fill="#000"/><rect x="692.7" y="559" width="3.400" height="12" fill="#000"/><rect x="704.2" y="559" width="3.400" height="12" fill="#000"/><rect x="728.4" y="559" width="3.400" height="12" fill="#000"/><rect x="740" y="559" width="3.400" height="12" fill="#000"/><rect x="752" y="559" width="3.400" height="12" fill="#000"/><rect x="764.2" y="559" width="3.400" height="12" fill="#000"/></svg></div>
</div>
</body></html>
